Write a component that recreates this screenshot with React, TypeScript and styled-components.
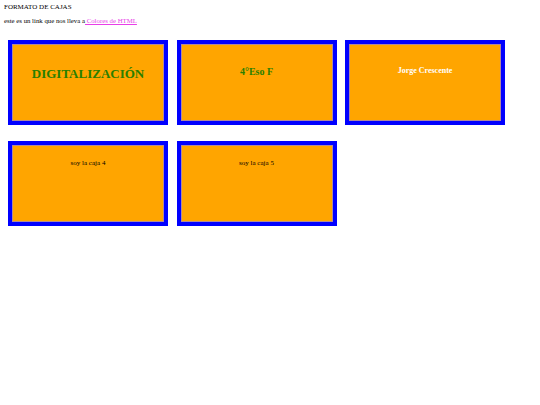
import React from 'react'
import styled, { createGlobalStyle } from 'styled-components'

const Global = createGlobalStyle`
  html, body { margin: 0; padding: 0; background: #fff; }
  body { font-family: "Liberation Serif", "Times New Roman", serif; color: #000; }
`

const Page = styled.div`
  padding: 3px 4px 0 4px;
`

const Heading = styled.div`
  font-size: 7px;
  line-height: 8px;
`

const Intro = styled.p`
  margin: 6px 0 0 0;
  font-size: 6.8px;
  line-height: 8px;
`

const Link = styled.a`
  color: #e83ee8;
  text-decoration: underline;
`

const Grid = styled.div`
  display: flex;
  flex-wrap: wrap;
  column-gap: 8.5px;
  row-gap: 16px;
  margin: 15px 0 0 4px;
  width: 520px;
`

const Box = styled.div`
  box-sizing: border-box;
  width: 160px;
  height: 85px;
  background: #ffa500;
  border: 4.5px solid #0000ff;
  box-shadow: inset 0 0 0 1px #b08a9a;
  text-align: center;
`

const Label = styled.div<{ $size: number; $top: number; $color: string; $bold?: boolean }>`
  margin-top: ${p => p.$top}px;
  font-size: ${p => p.$size}px;
  line-height: 1;
  color: ${p => p.$color};
  font-weight: ${p => (p.$bold ? 700 : 400)};
`

export default function App() {
  return (
    <>
      <Global />
      <Page>
        <Heading>FORMATO DE CAJAS</Heading>
        <Intro>
          este es un link que nos lleva a<Link href="#"> Colores de HTML</Link>
        </Intro>
        <Grid>
          <Box>
            <Label $size={13} $top={23} $color="#2a7f00" $bold>DIGITALIZACIÓN</Label>
          </Box>
          <Box>
            <Label $size={10} $top={23} $color="#2a7f00" $bold>4°Eso F</Label>
          </Box>
          <Box>
            <Label $size={8} $top={23} $color="#ffffff" $bold>Jorge Crescente</Label>
          </Box>
          <Box>
            <Label $size={7} $top={15} $color="#000">soy la caja 4</Label>
          </Box>
          <Box>
            <Label $size={7} $top={15} $color="#000">soy la caja 5</Label>
          </Box>
        </Grid>
      </Page>
    </>
  )
}
